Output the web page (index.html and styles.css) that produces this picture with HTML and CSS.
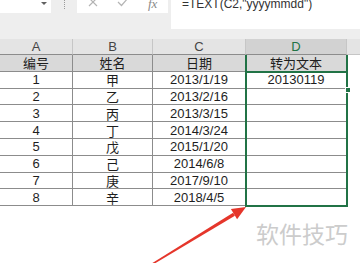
FILE: index.html
```html
<!DOCTYPE html>
<html lang="zh-CN">
<head>
    <meta charset="UTF-8">
    <meta name="viewport" content="width=device-width, initial-scale=1.0">
    <title>TEXT 日期转文本</title>
    <link rel="stylesheet" href="styles.css">
</head>
<body>

    <!-- Name box + formula bar -->
    <div class="toolbar">
        <div class="name-box"><span class="caret"></span></div>
        <div class="grip"></div>
        <div class="fx-buttons">
            <svg class="icon icon-x" width="10" height="10" viewBox="0 0 10 10">
                <path d="M1 1 L9 9 M9 1 L1 9" stroke="#b4b4b4" stroke-width="1.2" fill="none"/>
            </svg>
            <svg class="icon icon-check" width="12" height="10" viewBox="0 0 12 10">
                <path d="M1 5 L4.5 8.5 L11 1" stroke="#b4b4b4" stroke-width="1.2" fill="none"/>
            </svg>
            <span class="fx">fx</span>
        </div>
        <div class="formula">=TEXT(C2,"yyyymmdd")</div>
    </div>

    <!-- Worksheet -->
    <div class="sheet">
        <div class="col-head">A</div>
        <div class="col-head">B</div>
        <div class="col-head">C</div>
        <div class="col-head active">D</div>
        <div class="col-head last"></div>

        <div class="cell title">编号</div>
        <div class="cell title">姓名</div>
        <div class="cell title">日期</div>
        <div class="cell title">转为文本</div>
        <div class="cell blank"></div>

        <div class="cell">1</div><div class="cell">甲</div><div class="cell">2013/1/19</div><div class="cell">20130119</div><div class="cell blank"></div>
        <div class="cell">2</div><div class="cell">乙</div><div class="cell">2013/2/16</div><div class="cell"></div><div class="cell blank"></div>
        <div class="cell">3</div><div class="cell">丙</div><div class="cell">2013/3/15</div><div class="cell"></div><div class="cell blank"></div>
        <div class="cell">4</div><div class="cell">丁</div><div class="cell">2014/3/24</div><div class="cell"></div><div class="cell blank"></div>
        <div class="cell">5</div><div class="cell">戊</div><div class="cell">2015/1/20</div><div class="cell"></div><div class="cell blank"></div>
        <div class="cell">6</div><div class="cell">己</div><div class="cell">2014/6/8</div><div class="cell"></div><div class="cell blank"></div>
        <div class="cell">7</div><div class="cell">庚</div><div class="cell">2017/9/10</div><div class="cell"></div><div class="cell blank"></div>
        <div class="cell">8</div><div class="cell">辛</div><div class="cell">2018/4/5</div><div class="cell"></div><div class="cell blank"></div>

        <!-- green selection around column D -->
        <div class="selection"></div>
        <div class="selection-top"></div>
        <div class="handle"></div>
    </div>

    <div class="watermark">软件技巧</div>

    <svg class="arrow" width="360" height="263" viewBox="0 0 360 263">
        <polygon points="151.9,265.2 151.1,263.8 233.1,212.7 234.9,215.7" fill="#e5362b"/>
        <polygon points="246,207 237.1,219.3 230.9,209.1" fill="#e5362b"/>
    </svg>

</body>
</html>
```

FILE: styles.css
```css
body {
    margin: 0;
    width: 360px;
    height: 263px;
    overflow: hidden;
    position: relative;
    background-color: #ffffff;
    font-family: "Liberation Sans", "Noto Sans CJK SC", sans-serif;
}

/* Formula bar */
.toolbar {
    display: flex;
    align-items: flex-start;
    height: 39px;
    background-color: #eeeeee;
}
.name-box {
    width: 51px;
    height: 13px;
    background-color: #fff;
    position: relative;
}
.caret {
    position: absolute;
    left: 41px;
    top: 2px;
    width: 0;
    height: 0;
    border-left: 3px solid transparent;
    border-right: 3px solid transparent;
    border-top: 3px solid #606060;
}
.grip {
    width: 26px;
    display: flex;
    justify-content: center;
}
.grip::before {
    content: "";
    height: 9px;
    border-left: 1px dotted #9a9a9a;
}
.fx-buttons {
    width: 91px;
    height: 13px;
    background-color: #fff;
    display: flex;
    align-items: flex-start;
    padding-left: 11px;
    box-sizing: border-box;
    overflow: hidden;
}
.icon {
    margin-top: -3px;
}
.icon-check {
    margin-left: 19px;
}
.fx {
    margin-left: 19px;
    margin-top: -4px;
    font-family: "Liberation Serif", serif;
    font-style: italic;
    font-size: 13px;
    color: #8a8a8a;
}
.formula {
    flex: 1;
    margin-left: 3px;
    height: 29px;
    background-color: #fff;
    padding-left: 11px;
    font-size: 12px;
    line-height: 8px;
    color: #333;
    white-space: nowrap;
}

/* Worksheet grid */
.sheet {
    position: relative;
    display: grid;
    grid-template-columns: 73px 80px 93px 101px 13px;
    grid-template-rows: 16px repeat(9, 16.8px);
}
.col-head {
    background-color: #e4e4e4;
    border-right: 1px solid #c6c6c6;
    border-bottom: 1px solid #8c8c8c;
    box-sizing: border-box;
    font-size: 13px;
    line-height: 16px;
    text-align: center;
    color: #444;
}
.col-head.active {
    background-color: #d2d2d2;
    color: #217346;
}
.col-head.last {
    border-right: none;
    border-bottom-color: #c6c6c6;
}
.cell {
    display: flex;
    align-items: center;
    justify-content: center;
    box-sizing: border-box;
    border-right: 1px solid #8c8c8c;
    border-bottom: 1px solid #8c8c8c;
    font-size: 13px;
    color: #1e1e1e;
    background-color: #fff;
}
.cell.title {
    background-color: #d9d9d9;
}
.cell.blank {
    border: none;
}

/* Selection outline */
.selection {
    position: absolute;
    left: 245px;
    top: 16px;
    width: 103px;
    height: 152px;
    box-sizing: border-box;
    border: 2px solid #217346;
    border-top: none;
}
.selection-top {
    position: absolute;
    left: 245px;
    top: 32px;
    width: 103px;
    height: 2px;
    background-color: #217346;
}
.handle {
    position: absolute;
    left: 345px;
    top: 48px;
    width: 4px;
    height: 4px;
    background-color: #217346;
    border: 1px solid #fff;
}

.watermark {
    position: absolute;
    left: 256px;
    top: 220px;
    font-family: "Noto Sans CJK SC", sans-serif;
    font-size: 23px;
    line-height: 26px;
    color: #cccccc;
    white-space: nowrap;
}

.arrow {
    position: absolute;
    left: 0;
    top: 0;
    pointer-events: none;
}
```
